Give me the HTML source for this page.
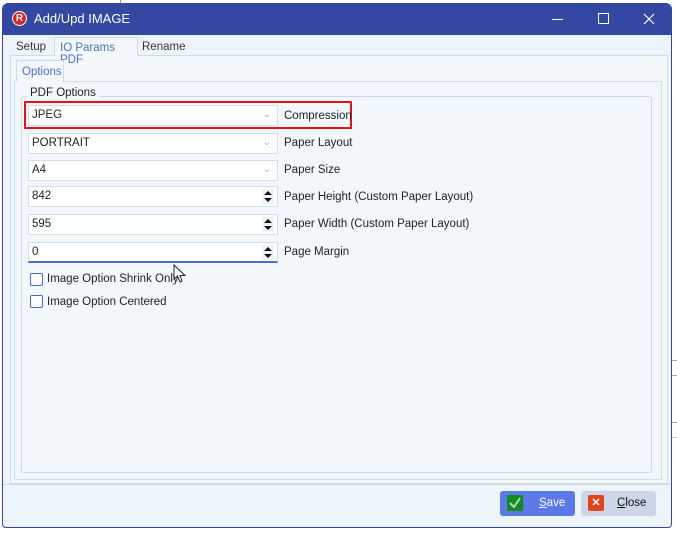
<!DOCTYPE html>
<html><head><style>
*{box-sizing:border-box;margin:0;padding:0}
body{width:677px;height:533px;background:#fff;position:relative;font-family:"Liberation Sans",sans-serif;font-size:11.5px;color:#222;overflow:hidden}
.a{position:absolute}
.win{left:2px;top:3px;width:670px;height:525px;background:#eef4fb;border:1px solid #3248a0;border-top:none;border-radius:6px 6px 4px 4px;overflow:hidden}
.title{left:0;top:0;width:670px;height:32px;background:#3349a1;color:#fff;font-size:13px}
.inp{background:#fff;border:1px solid #d3dde9;height:21px;padding:3px 0 0 3px;width:250px;left:28px}
.chev{right:6px;top:3px;color:#aab;font-size:10px}
.spin{right:3px;top:2px;width:12px;height:15px;background:#eef2f7}
.lbl{left:284px}
.cb{width:13px;height:13px;border:1px solid #4a6ccc;border-radius:2px;background:#fff}
</style></head><body>
<div class="a" style="left:120px;top:0;width:1px;height:3px;background:#999"></div>
<div class="a" style="left:672px;top:360px;width:5px;height:1px;background:#aab"></div>
<div class="a" style="left:672px;top:375px;width:5px;height:1px;background:#aab"></div>
<div class="a" style="left:672px;top:422px;width:5px;height:1px;background:#aab"></div>
<div class="a" style="left:672px;top:437px;width:5px;height:1px;background:#ccd"></div>
<div class="a win">
 <div class="a title">
  <div class="a" style="left:9px;top:8px;width:15px;height:15px;border-radius:50%;background:#d9262a;border:1px solid #fff;color:#fff;font-weight:bold;font-size:10px;text-align:center;line-height:13px">R</div>
  <div class="a" style="left:31px;top:8px">Add/Upd IMAGE</div>
  <div class="a" style="left:549px;top:16px;width:11px;height:1px;background:#fff"></div>
  <div class="a" style="left:595px;top:10px;width:11px;height:11px;border:1px solid #fff"></div>
  <svg class="a" style="left:640px;top:10px" width="12" height="12"><path d="M1 1L11 11M11 1L1 11" stroke="#fff" stroke-width="1.2"/></svg>
 </div>
 <div class="a" style="left:7px;top:52px;width:658px;height:429px;border:1px solid #cfdbe8;background:#f2f7fc"></div>
 <div class="a" style="left:13px;top:38px;color:#333">Setup</div>
 <div class="a" style="left:51px;top:34px;width:84px;height:19px;border:1px solid #cfdbe8;border-bottom:none;background:#f2f7fc;color:#5570c8;padding:4px 0 0 5px">IO Params PDF</div>
 <div class="a" style="left:139px;top:38px;color:#333">Rename</div>
 <div class="a" style="left:11px;top:78px;width:648px;height:399px;border:1px solid #d3dde9;background:#f2f7fc"></div>
 <div class="a" style="left:13px;top:57px;width:48px;height:22px;border:1px solid #cfdbe8;border-bottom:none;background:#f2f7fc;color:#5570c8;padding:5px 0 0 5px">Options</div>
 <div class="a" style="left:18px;top:93px;width:631px;height:377px;border:1px solid #cdd8e4;border-radius:3px"></div>
 <div class="a" style="left:24px;top:84px;background:#f2f7fc;padding:0 3px">PDF Options</div>
</div>
<div class="a" style="left:24px;top:101px;width:328px;height:28px;border:2px solid #e0141c"></div>
<div class="a inp" style="top:105px">JPEG<span class="a chev">&#8964;</span></div>
<div class="a lbl" style="top:110px">Compression</div>
<div class="a inp" style="top:133px">PORTRAIT<span class="a chev">&#8964;</span></div>
<div class="a lbl" style="top:137px">Paper Layout</div>
<div class="a inp" style="top:160px">A4<span class="a chev">&#8964;</span></div>
<div class="a lbl" style="top:164px">Paper Size</div>
<div class="a inp" style="top:186px">842<svg class="a spin" viewBox="0 0 12 15"><path d="M2 6L6 2L10 6ZM2 9L6 13L10 9Z" fill="#111"/></svg></div>
<div class="a lbl" style="top:191px">Paper Height (Custom Paper Layout)</div>
<div class="a inp" style="top:214px">595<svg class="a spin" viewBox="0 0 12 15"><path d="M2 6L6 2L10 6ZM2 9L6 13L10 9Z" fill="#111"/></svg></div>
<div class="a lbl" style="top:218px">Paper Width (Custom Paper Layout)</div>
<div class="a inp" style="top:242px;border-bottom:2px solid #4a6ccc">0<svg class="a spin" viewBox="0 0 12 15"><path d="M2 6L6 2L10 6ZM2 9L6 13L10 9Z" fill="#111"/></svg></div>
<div class="a lbl" style="top:246px">Page Margin</div>
<div class="a cb" style="left:30px;top:273px"></div>
<div class="a" style="left:47px;top:273px">Image Option Shrink Only</div>
<div class="a cb" style="left:30px;top:295px"></div>
<div class="a" style="left:47px;top:296px">Image Option Centered</div>
<svg class="a" style="left:173px;top:264px" width="14" height="20"><path d="M1 1L1 15L4.5 12L7 18L9 17L7 11.5L12 11.5Z" fill="#fff" stroke="#222"/></svg>
<div class="a" style="left:3px;top:484px;width:668px;height:1px;background:#cdd8e4"></div>
<div class="a" style="left:500px;top:491px;width:75px;height:25px;background:#5b7ae6;border-radius:3px;color:#fff">
 <div class="a" style="left:7px;top:4px;width:16px;height:16px;background:#118a1f"><svg width="16" height="16"><path d="M3 8L7 12L13 3" stroke="#b4d8b4" stroke-width="2" fill="none"/></svg></div>
 <div class="a" style="left:39px;top:6px"><u>S</u>ave</div></div>
<div class="a" style="left:581px;top:491px;width:75px;height:25px;background:#cdd6e6;border-radius:3px;color:#111">
 <div class="a" style="left:7px;top:4px;width:16px;height:16px;background:#e0451c;border-radius:2px;color:#fff;text-align:center;font-weight:bold;font-size:11px;line-height:16px">✕</div>
 <div class="a" style="left:36px;top:6px"><u>C</u>lose</div></div>
</body></html>
